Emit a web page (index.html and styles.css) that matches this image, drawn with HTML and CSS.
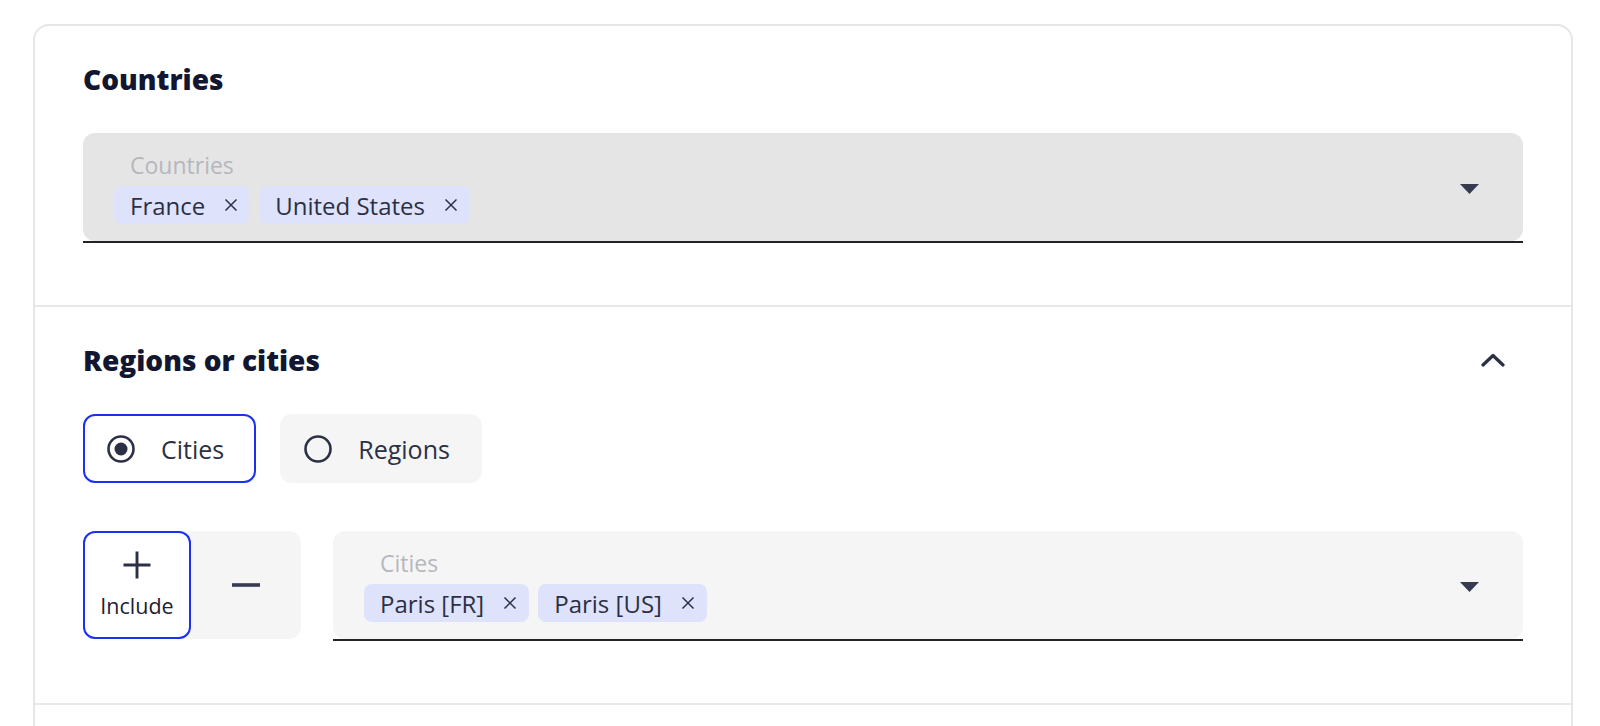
FILE: index.html
```html
<!DOCTYPE html>
<html lang="en">
<head>
<meta charset="utf-8">
<title>Targeting</title>
<link rel="stylesheet" href="styles.css">
</head>
<body>
<div class="page">
  <div class="card">
    <section class="section">
      <div class="section-head">
        <h2 class="section-title">Countries</h2>
      </div>
      <div class="select select--disabled">
        <div class="select-inner">
          <div class="select-body">
            <div class="select-label">Countries</div>
            <div class="chips">
              <span class="chip">France<svg class="chip-x" viewBox="0 0 14 14"><path d="M1.5 1.5L12.5 12.5M12.5 1.5L1.5 12.5"/></svg></span>
              <span class="chip">United States<svg class="chip-x" viewBox="0 0 14 14"><path d="M1.5 1.5L12.5 12.5M12.5 1.5L1.5 12.5"/></svg></span>
            </div>
          </div>
          <svg class="caret" viewBox="0 0 19 10"><path d="M0 0H19L9.5 10Z"/></svg>
        </div>
      </div>
    </section>

    <section class="section">
      <div class="section-head">
        <h2 class="section-title">Regions or cities</h2>
        <svg class="chevron" viewBox="0 0 24 14"><path d="M2 12L12 2.5L22 12"/></svg>
      </div>
      <div class="radio-row">
        <label class="radio-tile radio-tile--selected">
          <svg class="radio" viewBox="0 0 28 28"><circle class="radio-ring" cx="14" cy="14" r="12.5"/><circle class="radio-dot" cx="14" cy="14" r="6.5"/></svg>
          <span>Cities</span>
        </label>
        <label class="radio-tile">
          <svg class="radio" viewBox="0 0 28 28"><circle class="radio-ring" cx="14" cy="14" r="12.5"/></svg>
          <span>Regions</span>
        </label>
      </div>
      <div class="filter-row">
        <div class="toggle">
          <button class="toggle-btn toggle-btn--active" type="button">
            <svg class="toggle-icon" viewBox="0 0 28 28"><path d="M14 0.5V27.5M0.5 14H27.5"/></svg>
            <span class="toggle-text">Include</span>
          </button>
          <button class="toggle-btn" type="button">
            <svg class="toggle-icon toggle-icon--minus" viewBox="0 0 28 28"><path d="M0 14H28"/></svg>
          </button>
        </div>
        <div class="select select--grow">
          <div class="select-inner">
            <div class="select-body">
              <div class="select-label">Cities</div>
              <div class="chips">
                <span class="chip">Paris [FR]<svg class="chip-x" viewBox="0 0 14 14"><path d="M1.5 1.5L12.5 12.5M12.5 1.5L1.5 12.5"/></svg></span>
                <span class="chip">Paris [US]<svg class="chip-x" viewBox="0 0 14 14"><path d="M1.5 1.5L12.5 12.5M12.5 1.5L1.5 12.5"/></svg></span>
              </div>
            </div>
            <svg class="caret" viewBox="0 0 19 10"><path d="M0 0H19L9.5 10Z"/></svg>
          </div>
        </div>
      </div>
    </section>

    <section class="section section--stub"></section>
  </div>
</div>
</body>
</html>
```

FILE: styles.css
```css
* { box-sizing: border-box; }

html, body {
  margin: 0;
  background: #ffffff;
  height: 100%;
  overflow: hidden;
}

body {
  font-family: "Open Sans", "Noto Sans", sans-serif;
  color: #2b3045;
}

.page {
  padding: 24px 27px 0 33px;
}

.card {
  border: 2px solid #e6e6e6;
  border-radius: 16px;
  background: #fff;
}

.section {
  padding: 35px 48px 62px 48px;
}

.section + .section {
  border-top: 2px solid #e8e8e8;
}

.section--stub {
  height: 120px;
}

.section-head {
  display: flex;
  align-items: center;
  justify-content: space-between;
  height: 36px;
  margin-bottom: 36px;
}

.section-title {
  margin: 0;
  font-size: 28px;
  line-height: 36px;
  font-weight: 800;
  color: #121630;
  letter-spacing: 0;
}

.chevron {
  width: 24px;
  height: 14px;
  margin-right: 18px;
  fill: none;
  stroke: #2b3045;
  stroke-width: 3.2;
  stroke-linecap: round;
  stroke-linejoin: round;
}

/* select field */
.select {
  border-bottom: 2px solid #222327;
  height: 110px;
}

.select--grow {
  flex: 1;
}

.select-inner {
  height: 108px;
  background: #f5f5f5;
  border-radius: 12px;
  display: flex;
  align-items: center;
  padding: 0 44px 0 31px;
}

.select--disabled .select-inner {
  background: #e5e5e5;
}

.select-body {
  flex: 1;
  align-self: stretch;
  padding-top: 18px;
}

.select-label {
  font-size: 23px;
  line-height: 28px;
  color: #b5b7be;
  padding-left: 16px;
  margin-bottom: 7px;
}

.chips {
  display: flex;
  gap: 9px;
}

.chip {
  display: inline-flex;
  align-items: center;
  gap: 19px;
  height: 38px;
  padding: 0 12px 0 16px;
  border-radius: 8px;
  background: #dfe2fb;
  font-size: 24px;
  color: #2b3045;
  white-space: nowrap;
}

.chip-x {
  width: 14px;
  height: 14px;
  fill: none;
  stroke: #2b3045;
  stroke-width: 1.45;
}

.caret {
  width: 19px;
  height: 10px;
  fill: #363b52;
  margin-top: 3px;
}

/* radio tiles */
.radio-row {
  display: flex;
  gap: 24px;
  margin-bottom: 48px;
}

.radio-tile {
  display: flex;
  align-items: center;
  gap: 26px;
  height: 69px;
  padding: 0 30px 0 22px;
  border: 2px solid transparent;
  border-radius: 12px;
  background: #f5f5f5;
  font-size: 25px;
  color: #2b3045;
}

.radio-tile--selected {
  background: #fff;
  border-color: #1b31f2;
}

.radio {
  width: 28px;
  height: 28px;
}

.radio-ring {
  fill: none;
  stroke: #2b3045;
  stroke-width: 2.6;
}

.radio-dot {
  fill: #2b3045;
}

/* include / exclude row */
.filter-row {
  display: flex;
  gap: 32px;
}

.toggle {
  display: flex;
  height: 108px;
  background: #f5f5f5;
  border-radius: 12px;
}

.toggle-btn {
  display: flex;
  flex-direction: column;
  align-items: center;
  justify-content: center;
  gap: 14px;
  width: 110px;
  height: 108px;
  border: 2px solid transparent;
  border-radius: 12px;
  background: transparent;
  padding: 0;
  font-family: inherit;
  color: #2b3045;
}

.toggle-btn--active {
  width: 108px;
  background: #fff;
  border-color: #1b31f2;
}

.toggle-icon {
  width: 28px;
  height: 28px;
  fill: none;
  stroke: #2b3045;
  stroke-width: 2.9;
}

.toggle-icon--minus {
  stroke: #363b52;
  stroke-width: 3.6;
}

.toggle-text {
  font-size: 21.5px;
  line-height: 26px;
  color: #1e2130;
}
```
